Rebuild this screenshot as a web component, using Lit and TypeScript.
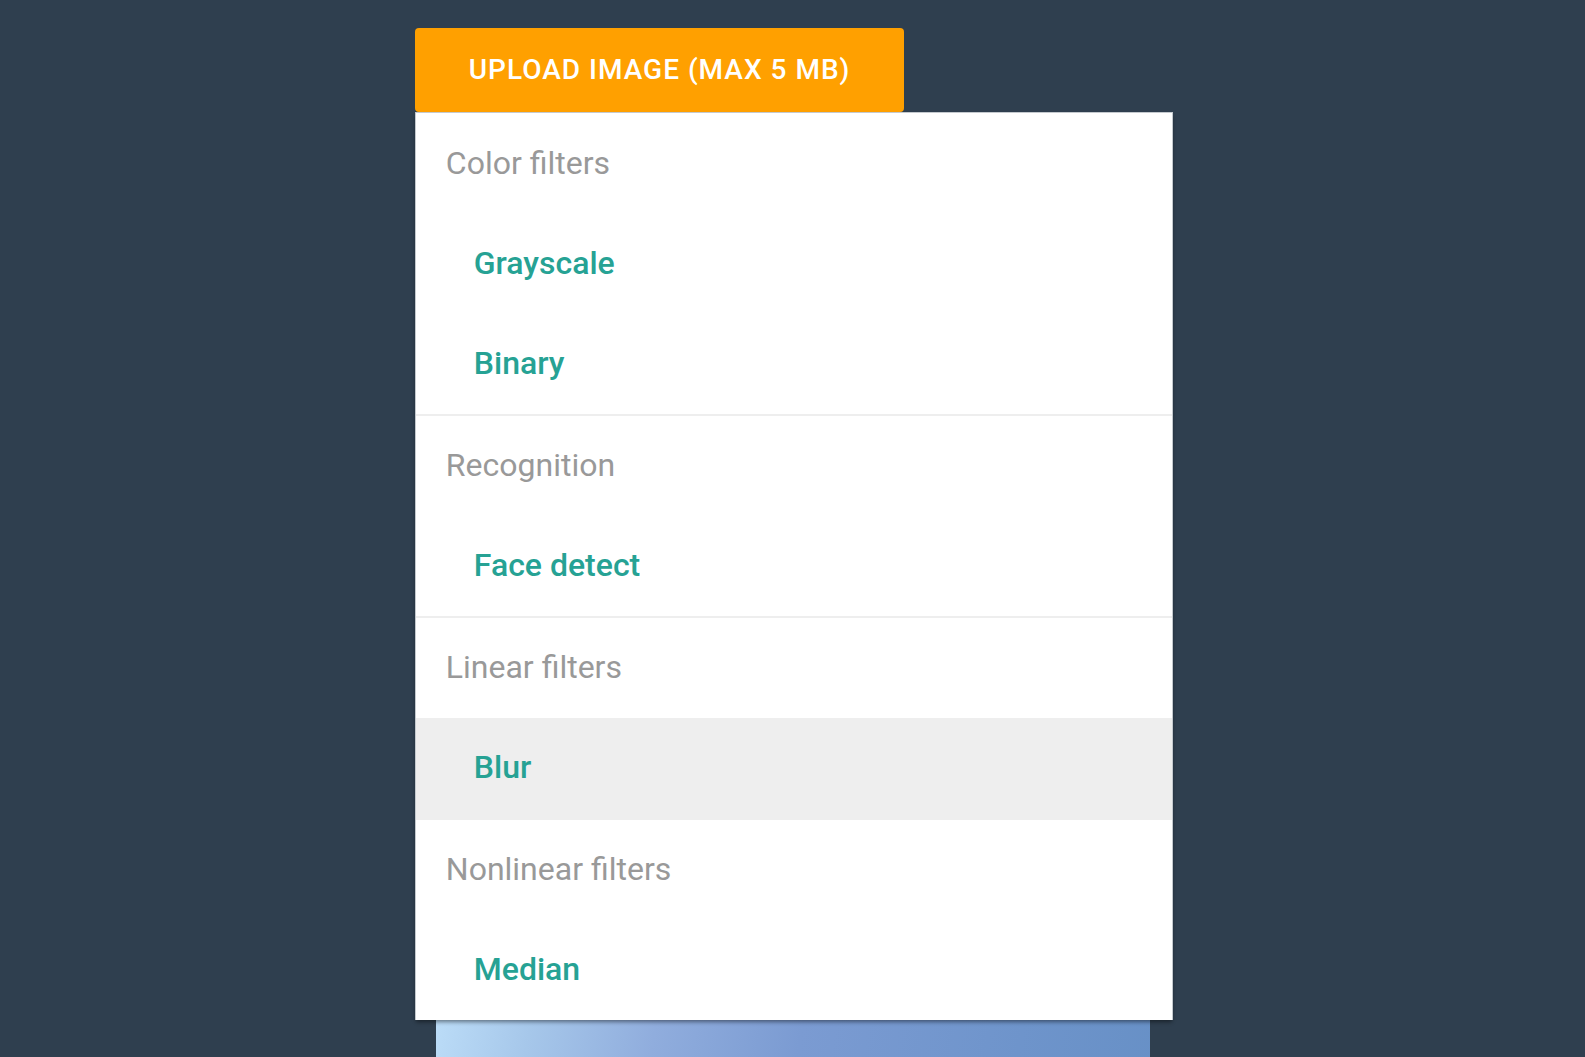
import { LitElement, html, css } from "lit";
import { customElement, state } from "lit/decorators.js";

interface FilterGroup {
  title: string;
  filters: string[];
}

const GROUPS: FilterGroup[] = [
  { title: "Color filters", filters: ["Grayscale", "Binary"] },
  { title: "Recognition", filters: ["Face detect"] },
  { title: "Linear filters", filters: ["Blur"] },
  { title: "Nonlinear filters", filters: ["Median"] },
];

@customElement("app-root")
export class AppRoot extends LitElement {
  @state() private active = "Blur";

  static styles = css`
    * {
      box-sizing: border-box;
    }
    :host {
      display: block;
      box-sizing: border-box;
      height: 100vh;
      overflow: hidden;
      padding: 28px 1px 0 4px;
      background: #2f3f4f;
      font-family: Roboto, sans-serif;
    }
    .page {
      width: 48%;
      margin: 0 auto;
      display: flex;
      flex-direction: column;
    }
    .upload {
      align-self: flex-start;
      height: 84px;
      padding: 0 54px;
      border: 0;
      border-radius: 4px;
      background: #ffa000;
      color: #fff;
      font: 500 28px/84px Roboto, sans-serif;
      letter-spacing: 1px;
      text-transform: uppercase;
      cursor: pointer;
    }
    .menu {
      position: relative;
      padding-top: 1px;
      background: #fff;
      border: 1px solid #c4c9ce;
      border-bottom: 0;
      box-shadow: 0 3px 4px -1px rgba(0, 0, 0, 0.45);
    }
    .group + .group {
      border-top: 2px solid #eee;
    }
    .title,
    .item {
      padding-bottom: 2px;
      font-size: 32px;
      line-height: 98px;
    }
    .title {
      margin: 0;
      padding-left: 30px;
      font-weight: 400;
      color: #999;
    }
    .item {
      display: block;
      width: 100%;
      padding-top: 0;
      padding-left: 58px;
      border: 0;
      background: none;
      color: #26a294;
      font-family: inherit;
      font-weight: 500;
      text-align: left;
      cursor: pointer;
    }
    .item.active {
      background: #eee;
    }
    .preview {
      height: 120px;
      margin: 0 23px 0 21px;
      background: linear-gradient(100deg, #bbdcf7, #a6c7ea 13%, #90addd 30%, #7b9bd2 50%, #6e94cb 80%, #6790c6);
    }
  `;

  render() {
    return html`
      <main class="page">
        <button class="upload" type="button">Upload image (max 5 MB)</button>
        <nav class="menu" aria-label="Filters">
          ${GROUPS.map(
            (group) => html`
              <section class="group">
                <h2 class="title">${group.title}</h2>
                ${group.filters.map(
                  (name) => html`<button
                    type="button"
                    class="item ${name === this.active ? "active" : ""}"
                    @mouseenter=${() => (this.active = name)}
                  >${name}</button>`
                )}
              </section>
            `
          )}
        </nav>
        <div class="preview"></div>
      </main>
    `;
  }
}
